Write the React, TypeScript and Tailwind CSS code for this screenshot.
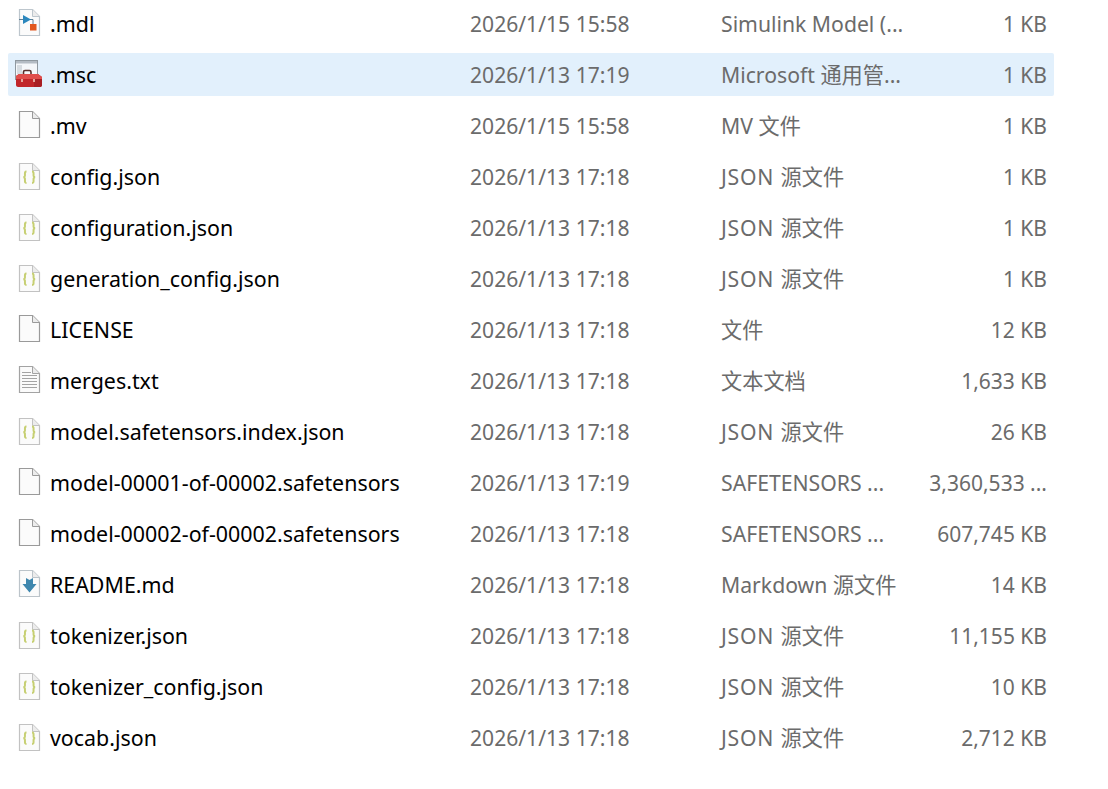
import React from "react";

type IconKind = "mdl" | "msc" | "blank" | "json" | "txt" | "md";

const files: { name: string; date: string; type: string; size: string; icon: IconKind; selected?: boolean }[] = [
  { name: ".mdl", date: "2026/1/15 15:58", type: "Simulink Model (...", size: "1 KB", icon: "mdl" },
  { name: ".msc", date: "2026/1/13 17:19", type: "Microsoft 通用管...", size: "1 KB", icon: "msc", selected: true },
  { name: ".mv", date: "2026/1/15 15:58", type: "MV 文件", size: "1 KB", icon: "blank" },
  { name: "config.json", date: "2026/1/13 17:18", type: "JSON 源文件", size: "1 KB", icon: "json" },
  { name: "configuration.json", date: "2026/1/13 17:18", type: "JSON 源文件", size: "1 KB", icon: "json" },
  { name: "generation_config.json", date: "2026/1/13 17:18", type: "JSON 源文件", size: "1 KB", icon: "json" },
  { name: "LICENSE", date: "2026/1/13 17:18", type: "文件", size: "12 KB", icon: "blank" },
  { name: "merges.txt", date: "2026/1/13 17:18", type: "文本文档", size: "1,633 KB", icon: "txt" },
  { name: "model.safetensors.index.json", date: "2026/1/13 17:18", type: "JSON 源文件", size: "26 KB", icon: "json" },
  { name: "model-00001-of-00002.safetensors", date: "2026/1/13 17:19", type: "SAFETENSORS ...", size: "3,360,533 ...", icon: "blank" },
  { name: "model-00002-of-00002.safetensors", date: "2026/1/13 17:18", type: "SAFETENSORS ...", size: "607,745 KB", icon: "blank" },
  { name: "README.md", date: "2026/1/13 17:18", type: "Markdown 源文件", size: "14 KB", icon: "md" },
  { name: "tokenizer.json", date: "2026/1/13 17:18", type: "JSON 源文件", size: "11,155 KB", icon: "json" },
  { name: "tokenizer_config.json", date: "2026/1/13 17:18", type: "JSON 源文件", size: "10 KB", icon: "json" },
  { name: "vocab.json", date: "2026/1/13 17:18", type: "JSON 源文件", size: "2,712 KB", icon: "json" },
];

function Sheet({ children, stroke = "#a3a3a3", className = "" }: { children?: React.ReactNode; stroke?: string; className?: string }) {
  return (
    <svg width="27" height="29" viewBox="0 0 27 29" className={`block blur-[0.3px] ${className}`}>
      <path d="M5.5 0.5H18.5L25.5 7.5V26.5H5.5Z" fill="#fbfbfb" stroke={stroke} strokeWidth="1.2" />
      <path d="M18.5 0.5V7.5H25.5" fill="#ececec" stroke={stroke} />
      {children}
    </svg>
  );
}

function FileIcon({ kind }: { kind: IconKind }) {
  if (kind === "mdl") {
    return (
      <Sheet stroke="#bdc6cd">
        <path d="M5 10.5H9M16 10.5H19V16" fill="none" stroke="#5f7f95" strokeWidth="1" />
        <path d="M9 6L17 10.5L9 15Z" fill="#2b87bd" />
        <rect x="16" y="15" width="6.5" height="6.5" fill="#e2571e" />
      </Sheet>
    );
  }
  if (kind === "msc") {
    return (
      <svg width="28" height="29" viewBox="0 0 28 29" className="block blur-[0.3px]">
        <rect x="1.5" y="0.5" width="22" height="19" fill="#f4f7fa" stroke="#8f989f" />
        <rect x="2" y="1" width="21" height="2.5" fill="#b4bcc4" />
        <rect x="3" y="5" width="5" height="9" fill="#d6dce1" />
        <path d="M9.5 14V12C9.5 11.2 10.2 10.5 11 10.5H15.5C16.3 10.5 17 11.2 17 12V14" fill="none" stroke="#5a2f2b" strokeWidth="1.6" />
        <path d="M2 16L5 14H24L28 17V25C28 26 27 27 26 27H4C3 27 2 26 2 25Z" fill="#c1262a" />
        <path d="M2 16L5 14H24L28 17V19H2Z" fill="#e04e4c" />
        <path d="M20 19H28V25C28 26 27 27 26 27H20Z" fill="#a81f24" />
        <rect x="7" y="19" width="2" height="3" fill="#e3a49b" />
        <rect x="19" y="19" width="2" height="3" fill="#e3a49b" />
      </svg>
    );
  }
  if (kind === "json") {
    return (
      <Sheet stroke="#c2c2c2" className="translate-y-px">
        <path d="M12.5 8.5C10 8.5 11.4 11.5 10.8 13.2C10.5 13.9 10 14.2 9.3 14.2C10 14.2 10.5 14.5 10.8 15.2C11.4 16.9 10 19.9 12.5 19.9" fill="none" stroke="#c6cf72" strokeWidth="2" />
        <path d="M18 8.5C20.5 8.5 19.1 11.5 19.7 13.2C20 13.9 20.5 14.2 21.2 14.2C20.5 14.2 20 14.5 19.7 15.2C19.1 16.9 20.5 19.9 18 19.9" fill="none" stroke="#c6cf72" strokeWidth="2" />
      </Sheet>
    );
  }
  if (kind === "txt") {
    return (
      <Sheet>
        <path d="M8 6.5H17M8 9.5H23M8 12.5H23M8 15.5H23M8 18.5H23M8 21.5H23" stroke="#a4a4a4" strokeWidth="1.2" />
      </Sheet>
    );
  }
  if (kind === "md") {
    return (
      <Sheet stroke="#bcc4ca">
        <path d="M12 8L15.5 10L19 8V14H22.5L15.5 22.5L8.5 14H12Z" fill="#3f87ae" />
      </Sheet>
    );
  }
  return <Sheet stroke="#9a9a9a" />;
}

function TypeLabel({ type }: { type: string }) {
  // the JSON runs sit wider than the font gives
  if (type.startsWith("JSON ")) {
    return (
      <>
        <span className="tracking-[0.8px]">JSON </span>
        {type.slice(5)}
      </>
    );
  }
  return <>{type}</>;
}

export default function App() {
  return (
    <div
      className="flex min-h-[789px] w-[1108px] flex-col gap-2 overflow-hidden bg-white pl-2 pt-[2px] text-[21px]"
      style={{ fontFamily: '"Noto Sans", "Noto Sans CJK SC", sans-serif' }}
    >
      {files.map((file) => (
        <div
          key={file.name}
          className={`flex h-[43px] w-[1046px] items-center rounded-[2px] ${file.selected ? "bg-[#e2f0fc]" : ""}`}
        >
          <div className="w-[42px] shrink-0 pl-[6px]">
            <FileIcon kind={file.icon} />
          </div>
          <div className="w-[420px] shrink-0 whitespace-nowrap pt-[2px] text-[21.4px] text-black">{file.name}</div>
          <div className="w-[251px] shrink-0 whitespace-nowrap text-[21.1px] text-[#6b6b6b]">{file.date}</div>
          <div className="w-[200px] shrink-0 whitespace-nowrap text-[21.2px] text-[#6b6b6b]">
            <TypeLabel type={file.type} />
          </div>
          <div className="flex-1 whitespace-nowrap pr-[7px] pt-[2px] text-right text-[#6b6b6b]">{file.size}</div>
        </div>
      ))}
    </div>
  );
}
